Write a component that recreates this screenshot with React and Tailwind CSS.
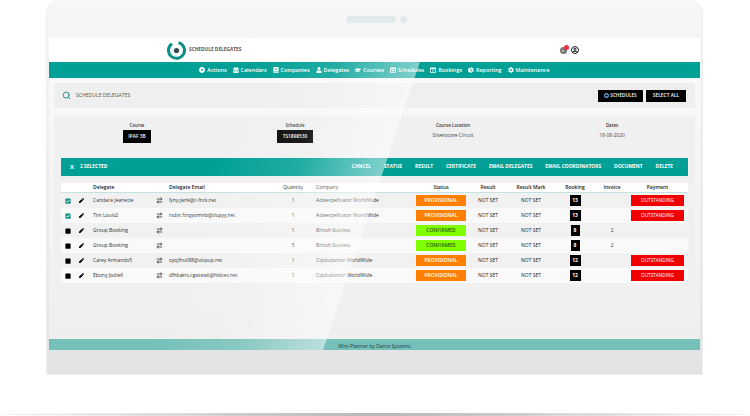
import { Search, ArrowRightLeft } from 'lucide-react';
import {
  FaDotCircle, FaCalendarAlt, FaBook, FaUser, FaGraduationCap, FaTable, FaColumns,
  FaChartPie, FaCog, FaPen, FaCheckSquare, FaSquare, FaPlusCircle, FaRegUserCircle,
} from 'react-icons/fa';

const navItems = [
  { label: 'Actions', Icon: FaDotCircle },
  { label: 'Calendars', Icon: FaCalendarAlt },
  { label: 'Companies', Icon: FaBook },
  { label: 'Delegates', Icon: FaUser },
  { label: 'Courses', Icon: FaGraduationCap },
  { label: 'Schedules', Icon: FaTable },
  { label: 'Bookings', Icon: FaColumns },
  { label: 'Reporting', Icon: FaChartPie },
  { label: 'Maintenance', Icon: FaCog },
];

const actions = ['CANCEL', 'STATUS', 'RESULT', 'CERTIFICATE', 'EMAIL DELEGATES', 'EMAIL COORDINATORS', 'DOCUMENT', 'DELETE'];

const rows = [
  { name: 'Candace Jeanette', email: 'fyny.jwnk@c-fnck.net', qty: 1, company: 'Adwerpeficator WorldWide', status: 'PROVISIONAL', booking: 13, invoice: '', paid: false, checked: true },
  { name: 'Tim Louis2', email: 'rxdxr.fcrqysrmnb@zlupyy.net', qty: 1, company: 'Adwerpeficator WorldWide', status: 'PROVISIONAL', booking: 13, invoice: '', paid: false, checked: true },
  { name: 'Group Booking', email: '', qty: 1, company: 'British Success', status: 'CONFIRMED', booking: 8, invoice: 2, paid: true },
  { name: 'Group Booking', email: '', qty: 5, company: 'British Success', status: 'CONFIRMED', booking: 8, invoice: 2, paid: true },
  { name: 'Carey Armando5', email: 'oyojfnu688@viopup.net', qty: 1, company: 'Cipdudantor WorldWide', status: 'PROVISIONAL', booking: 12, invoice: '', paid: false },
  { name: 'Ebony Jodie6', email: 'dfhbakrs.cgwtewit@hkktev.net', qty: 1, company: 'Cipdudantor WorldWide', status: 'PROVISIONAL', booking: 12, invoice: '', paid: false },
];

const gridCols = 'grid grid-cols-[13px_14px_66px_10px_115px_28px_107px_54px_40px_46px_42px_32px_59px] items-center';

const InfoCell = ({ title, className, children }) => (
  <div className={`flex flex-col items-center absolute top-[6px] ${className}`}>
    <span className="text-[4.4px] leading-[6px] font-semibold text-[#333]">{title}</span>
    {children}
  </div>
);

const App = () => {
  return (
    <div className="relative w-[750px] h-[416px] bg-white overflow-hidden font-['Open_Sans',sans-serif]">
      <div className="ml-[46px] w-[657px] h-[375px] rounded-t-[14px] bg-gradient-to-b from-[#f7f7f7] to-[#e3e3e3] border-x border-b border-[#eeeeee] px-[2px] pt-[16px]">
        <div className="flex justify-center items-center gap-[4px] h-[7px] ml-[4px]">
          <div className="w-[50px] h-[7px] rounded-full bg-[#e1e9ea]" />
          <div className="w-[7px] h-[7px] rounded-full bg-[#e1e9ea]" />
        </div>

        <div className="mt-[15px] w-[651px] h-[312px] flex flex-col bg-gradient-to-b from-[#fafafa] to-[#eeeeee]">
          <header className="relative h-[24px] bg-white flex items-center">
            <div className="ml-[118px] flex items-center gap-[3px]">
              <svg width="19" height="19" viewBox="0 0 19 19">
                <path d="M11.5 1.6 A8 8 0 1 1 5 2.7" fill="none" stroke="#0a8f86" strokeWidth="3" />
                <path d="M7.5 5.2 A4.8 4.8 0 0 0 10.8 14.1" fill="none" stroke="#a8d8d3" strokeWidth="0.6" />
                <circle cx="9.5" cy="9.5" r="2.6" fill="#3d4a55" />
              </svg>
              <span className="text-[4.8px] font-bold text-[#555]">SCHEDULE DELEGATES</span>
            </div>
            <div className="ml-[319px] flex items-center gap-[3px]">
              <div className="relative w-[8px] h-[8px]">
                <span className="absolute left-0 bottom-0 w-[7px] h-[7px] rounded-full bg-[#777]" />
                <span className="absolute left-[2px] bottom-[2px] w-[2px] h-[2px] rounded-full bg-[#ccc]" />
                <span className="absolute -top-[1px] right-[-1px] w-[5px] h-[5px] rounded-full bg-[#e8323c]" />
              </div>
              <FaRegUserCircle className="w-[8px] h-[8px] text-black" />
            </div>
          </header>

          <nav className="h-[16px] bg-[#00a096] flex items-center justify-center gap-[6px] text-white text-[5.4px] font-semibold">
            {navItems.map(({ label, Icon }) => (
              <span key={label} className="flex items-center gap-[2px]">
                <Icon className="w-[6px] h-[6px]" />
                {label}
              </span>
            ))}
          </nav>

          <div className="mx-[5px] mt-[5px] h-[25px] bg-[#efefef] flex items-center pl-[8px] pr-[9px]">
            <Search className="w-[9px] h-[9px] text-[#1d8f88]" strokeWidth={2.5} />
            <span className="ml-[5px] text-[5.1px] text-[#555]">SCHEDULE DELEGATES</span>
            <button className="ml-auto w-[45px] h-[12px] bg-black text-white text-[4.7px] font-semibold flex items-center justify-center gap-[1px]">
              <FaPlusCircle className="w-[5px] h-[5px] text-[#58aee8]" />
              SCHEDULES
            </button>
            <button className="ml-[3px] w-[40px] h-[12px] bg-black text-white text-[4.9px] font-semibold">SELECT ALL</button>
          </div>

          <main className="mx-[5px] mt-[7px] h-[175px] bg-[#f0f0f0] border-t border-[#f6f6f6]">
            <div className="relative h-[41px]">
              <InfoCell title="Course" className="left-[69px] w-[28px]">
                <span className="mt-[2px] w-[28px] h-[13px] bg-black text-white text-[4.8px] font-semibold flex items-center justify-center">IPAF 3B</span>
              </InfoCell>
              <InfoCell title="Schedule" className="left-[223px] w-[36px]">
                <span className="mt-[2px] w-[36px] h-[13px] bg-black text-white text-[4.8px] font-semibold flex items-center justify-center">TS1898530</span>
              </InfoCell>
              <InfoCell title="Course Location" className="left-[369px] w-[60px]">
                <span className="mt-[4px] text-[4.9px] text-[#444]">Silverstone Circuit</span>
              </InfoCell>
              <InfoCell title="Dates" className="left-[538px] w-[40px]">
                <span className="mt-[4px] text-[4.9px] text-[#444]">18-08-2020</span>
              </InfoCell>
            </div>

            <div className="mx-[7px] h-[20px] bg-[#00a096] border-y border-[#e8f4f3] flex items-center text-white text-[4.9px] font-bold">
              <span className="ml-[9px] text-[6px]">X</span>
              <span className="ml-[6px]">2 SELECTED</span>
              <div className="ml-auto mr-[15px] flex gap-[13px]">
                {actions.map((a) => <span key={a}>{a}</span>)}
              </div>
            </div>

            <div className="mx-[7px] mt-[6px]">
              <div className={`${gridCols} h-[10px] bg-white border-b border-[#c2e3e0] text-[5px] font-semibold text-[#222]`}>
                <span />
                <span />
                <span className="pl-[5px]">Delegate</span>
                <span />
                <span className="pl-[5px]">Delegate Email</span>
                <span className="text-center font-medium">Quantity</span>
                <span className="pl-[9px] font-medium">Company</span>
                <span className="text-center">Status</span>
                <span className="text-center">Result</span>
                <span className="text-center">Result Mark</span>
                <span className="text-center">Booking</span>
                <span className="text-center">Invoice</span>
                <span className="text-center">Payment</span>
              </div>
              {rows.map((row, i) => (
                <div
                  key={i}
                  className={`${gridCols} h-[15px] text-[4.8px] text-[#333] ${i % 2 === 0 ? 'bg-[#f1f1f1]' : 'bg-[#f9f9f9]'}`}
                >
                  <span className="flex justify-center">
                    {row.checked
                      ? <FaCheckSquare className="w-[6px] h-[6px] text-[#0b8f87]" />
                      : <FaSquare className="w-[6px] h-[6px] text-black" />}
                  </span>
                  <span className="flex justify-center"><FaPen className="w-[5px] h-[5px] text-black" /></span>
                  <span className="pl-[5px] font-medium text-[5px] whitespace-nowrap">{row.name}</span>
                  <span className="flex justify-center"><ArrowRightLeft className="w-[7px] h-[7px] text-[#222]" strokeWidth={2.5} /></span>
                  <span className="pl-[5px] whitespace-nowrap">{row.email}</span>
                  <span className="text-center">{row.qty}</span>
                  <span className="pl-[9px] font-medium text-[5px] whitespace-nowrap">{row.company}</span>
                  <span className={`h-[11px] w-[50px] justify-self-center flex items-center justify-center text-[5px] font-semibold ${row.status === 'CONFIRMED' ? 'bg-[#7fff00] text-[#2c5a00]' : 'bg-[#ff8000] text-white'}`}>
                    {row.status}
                  </span>
                  <span className="text-center font-medium text-[5px] text-[#222]">NOT SET</span>
                  <span className="text-center font-medium text-[5px] text-[#222]">NOT SET</span>
                  <span className={`h-[11px] justify-self-center bg-black text-white font-bold text-[5px] flex items-center justify-center ${row.booking > 9 ? 'w-[11px]' : 'w-[9px]'}`}>
                    {row.booking}
                  </span>
                  <span className="text-center">{row.invoice}</span>
                  {row.paid
                    ? <span />
                    : <span className="h-[11px] w-[53px] justify-self-center bg-[#f00000] text-white font-medium text-[4.7px] flex items-center justify-center">OUTSTANDING</span>}
                </div>
              ))}
            </div>
          </main>

          <footer className="mt-auto h-[11px] bg-[#76c0ba] flex items-end justify-center text-[5px] leading-[8px] text-[#1f3f3c]">
            Mini-Planner by Dante Systems
          </footer>
        </div>
      </div>

      {/* glare across the screen */}
      <svg className="absolute inset-0 pointer-events-none" width="750" height="416">
        <defs>
          <linearGradient id="glare" gradientUnits="userSpaceOnUse" x1="150" y1="345" x2="305" y2="398">
            <stop offset="0" stopColor="#fff" stopOpacity="0" />
            <stop offset="0.5" stopColor="#fff" stopOpacity="0.12" />
            <stop offset="1" stopColor="#fff" stopOpacity="0.5" />
          </linearGradient>
        </defs>
        <polygon points="49,38 428,38 323,350 49,350" fill="url(#glare)" />
      </svg>

      {/* laptop base shadow */}
      <div className="absolute left-0 bottom-0 w-[750px] h-[3px] rounded-[50%] bg-gradient-to-r from-[#eeeeee] via-[#b8b8b8] to-[#eeeeee]" />
    </div>
  );
};

export default App;
